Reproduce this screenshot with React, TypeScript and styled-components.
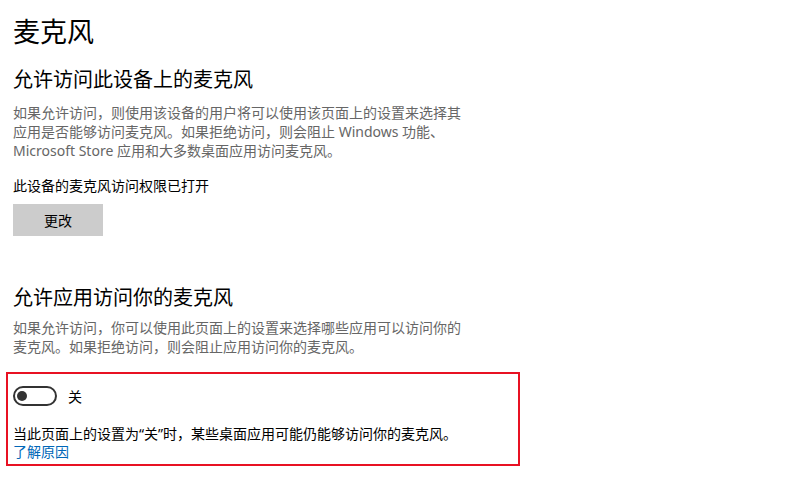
import React from 'react';
import styled, { createGlobalStyle } from 'styled-components';

const GlobalStyle = createGlobalStyle`
	body {
		margin: 0;
		background: #fff;
		font-family: "Noto Sans", "Noto Sans CJK SC", sans-serif;
		color: #000;
	}
`;

const Page = styled.main`
	padding: 12px 13px 0;
	width: 792px;
	box-sizing: border-box;
`;

const Title = styled.h1`
	margin: 0;
	font-size: 27px;
	font-weight: 400;
	line-height: 40px;
`;

const SectionTitle = styled.h2<{ $gap: number }>`
	margin: ${p => p.$gap}px 0 0;
	font-size: 20px;
	font-weight: 400;
	line-height: 28px;
`;

const Description = styled.p<{ $gap: number }>`
	margin: ${p => p.$gap}px 0 0;
	width: 460px;
	font-size: 14px;
	line-height: 19px;
	color: #666;
`;

const Status = styled.p`
	margin: 16px 0 0;
	font-size: 14px;
	line-height: 20px;
`;

const Button = styled.button`
	display: block;
	margin-top: 8px;
	width: 90px;
	height: 32px;
	border: none;
	background: #ccc;
	font-family: inherit;
	font-size: 14px;
	color: #000;
	padding: 0;
`;

const Highlight = styled.section`
	margin: 15.5px 0 0 -7px;
	width: 514px;
	box-sizing: border-box;
	border: 2px solid #e81123;
	padding: 12px 5px 3px;
`;

const ToggleRow = styled.div`
	display: flex;
	align-items: center;
	gap: 11px;
	font-size: 14px;
	height: 20px;
`;

const Switch = styled.span`
	display: flex;
	align-items: center;
	width: 44px;
	height: 20px;
	box-sizing: border-box;
	border: 2px solid #333;
	border-radius: 10px;
	padding: 0 2px;

	&::before {
		content: "";
		width: 10px;
		height: 10px;
		border-radius: 50%;
		background: #333;
	}
`;

const Note = styled.p`
	margin: 19px 0 0;
	font-size: 14px;
	line-height: 18px;
`;

const LearnLink = styled.a`
	display: block;
	font-size: 14px;
	line-height: 18px;
	color: #0067b8;
	text-decoration: none;
`;

const App: React.FC = () => {
	return (
		<Page>
			<GlobalStyle />
			<Title>麦克风</Title>
			<SectionTitle $gap={14}>允许访问此设备上的麦克风</SectionTitle>
			<Description $gap={8.5}>
				如果允许访问，则使用该设备的用户将可以使用该页面上的设置来选择其应用是否能够访问麦克风。如果拒绝访问，则会阻止 Windows 功能、Microsoft Store 应用和大多数桌面应用访问麦克风。
			</Description>
			<Status>此设备的麦克风访问权限已打开</Status>
			<Button>更改</Button>
			<SectionTitle $gap={48}>允许应用访问你的麦克风</SectionTitle>
			<Description $gap={6.5}>
				如果允许访问，你可以使用此页面上的设置来选择哪些应用可以访问你的麦克风。如果拒绝访问，则会阻止应用访问你的麦克风。
			</Description>
			<Highlight>
				<ToggleRow>
					<Switch />
					<span>关</span>
				</ToggleRow>
				<Note>当此页面上的设置为“关”时，某些桌面应用可能仍能够访问你的麦克风。</Note>
				<LearnLink href="#">了解原因</LearnLink>
			</Highlight>
		</Page>
	);
};

export default App;
